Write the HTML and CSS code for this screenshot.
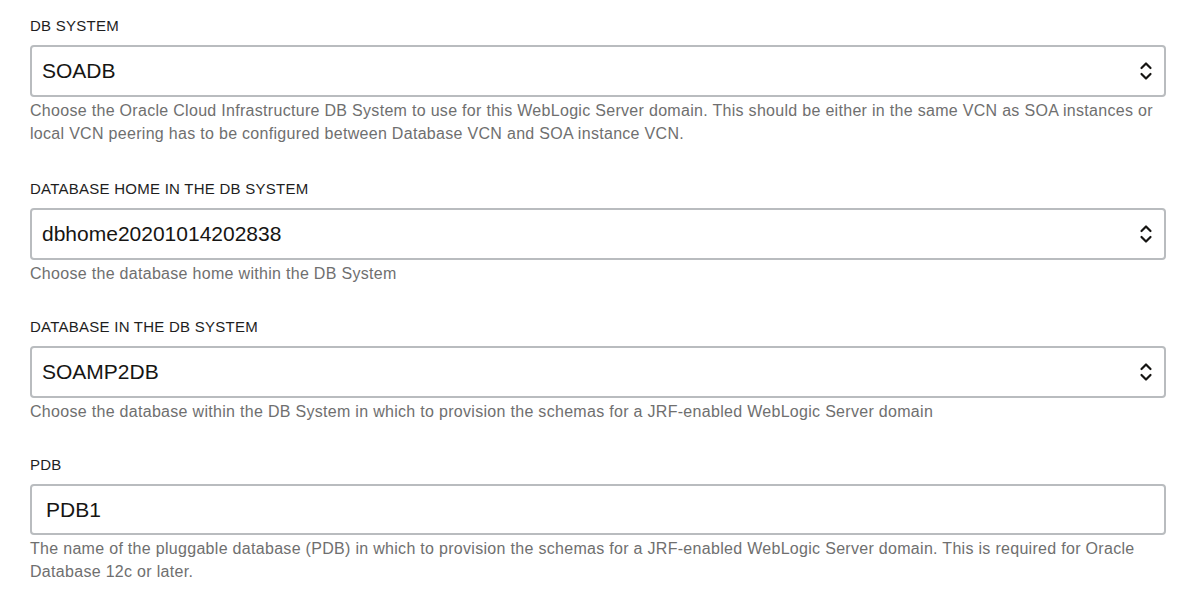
FILE: index.html
```html
<!DOCTYPE html>
<html>
<head>
<meta charset="utf-8">
<link rel="stylesheet" href="styles.css">
</head>
<body>
<div class="form">
  <div class="field">
    <div class="label">DB SYSTEM</div>
    <div class="select"><span class="value">SOADB</span>
      <svg class="chev" width="14" height="22" viewBox="0 0 14 22"><path d="M2.5 8 L7 3.5 L11.5 8 M2.5 14 L7 18.5 L11.5 14" fill="none" stroke="#161513" stroke-width="2.2" stroke-linecap="round" stroke-linejoin="round"/></svg>
    </div>
    <div class="help help-long">Choose the Oracle Cloud Infrastructure DB System to use for this WebLogic Server domain. This should be either in the same VCN as SOA instances or local VCN peering has to be configured between Database VCN and SOA instance VCN.</div>
  </div>
  <div class="field">
    <div class="label">DATABASE HOME IN THE DB SYSTEM</div>
    <div class="select"><span class="value">dbhome20201014202838</span>
      <svg class="chev" width="14" height="22" viewBox="0 0 14 22"><path d="M2.5 8 L7 3.5 L11.5 8 M2.5 14 L7 18.5 L11.5 14" fill="none" stroke="#161513" stroke-width="2.2" stroke-linecap="round" stroke-linejoin="round"/></svg>
    </div>
    <div class="help">Choose the database home within the DB System</div>
  </div>
  <div class="field">
    <div class="label">DATABASE IN THE DB SYSTEM</div>
    <div class="select"><span class="value">SOAMP2DB</span>
      <svg class="chev" width="14" height="22" viewBox="0 0 14 22"><path d="M2.5 8 L7 3.5 L11.5 8 M2.5 14 L7 18.5 L11.5 14" fill="none" stroke="#161513" stroke-width="2.2" stroke-linecap="round" stroke-linejoin="round"/></svg>
    </div>
    <div class="help">Choose the database within the DB System in which to provision the schemas for a JRF-enabled WebLogic Server domain</div>
  </div>
  <div class="field">
    <div class="label">PDB</div>
    <div class="input"><span class="value">PDB1</span></div>
    <div class="help">The name of the pluggable database (PDB) in which to provision the schemas for a JRF-enabled WebLogic Server domain. This is required for Oracle Database 12c or later.</div>
  </div>
</div>
</body>
</html>
```

FILE: styles.css
```css
html, body {
  margin: 0;
  padding: 0;
  background: #ffffff;
}
body {
  font-family: "Liberation Sans", Arial, sans-serif;
}
.form {
  padding: 17px 26px 0 30px;
  display: flex;
  flex-direction: column;
  gap: 33px;
}
.field {
  display: flex;
  flex-direction: column;
}
.label {
  font-size: 15px;
  line-height: 18px;
  color: #1e1e1e;
  margin-bottom: 10px;
  letter-spacing: 0.25px;
}
.select, .input {
  box-sizing: border-box;
  height: 52px;
  border: 2px solid #b9bcbf;
  border-radius: 4px;
  display: flex;
  align-items: center;
  justify-content: space-between;
  padding: 0 11px 0 10px;
  background: #fff;
}
.input {
  height: 51px;
  padding-left: 14px;
}
.value {
  font-size: 21px;
  color: #161513;
}
.chev {
  display: block;
}
.help {
  margin-top: 2px;
  font-size: 16px;
  line-height: 23px;
  color: #6f6f6f;
  letter-spacing: 0.3px;
}
.help-long {
  margin-bottom: 2px;
}
```
